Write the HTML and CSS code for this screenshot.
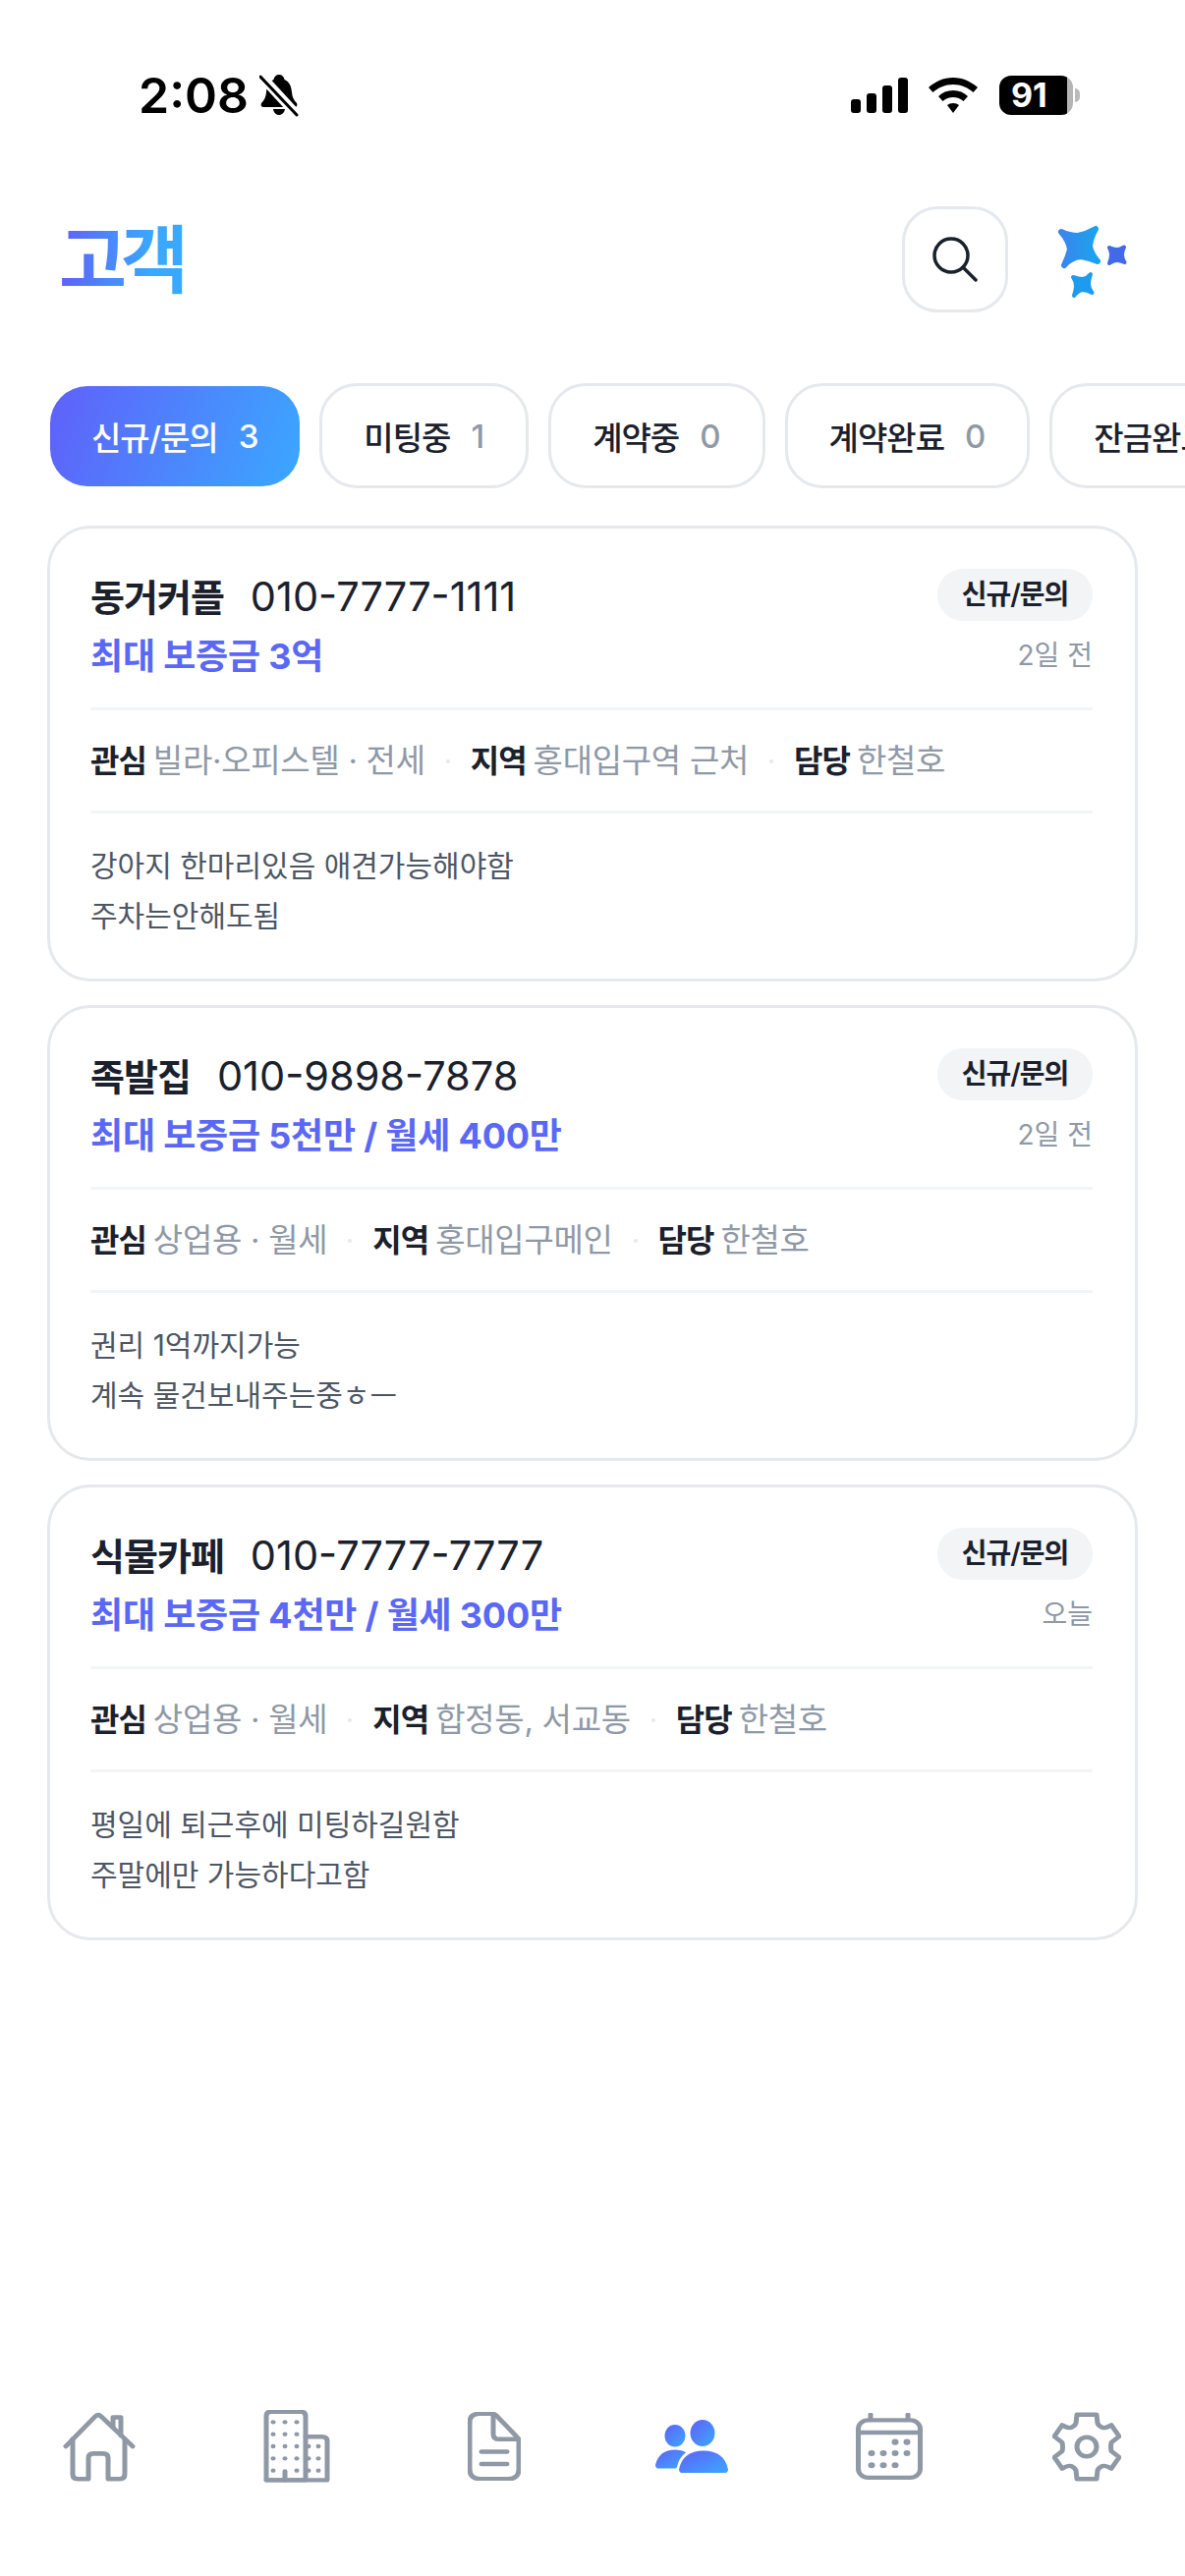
FILE: index.html
```html
<!DOCTYPE html>
<html>
<head>
  <title>고객</title>
  <meta name="viewport" content="width=device-width, initial-scale=1">
  <link rel="stylesheet" href="styles.css">
</head>
<body>
  <svg class="defs" width="0" height="0">
    <defs>
      <linearGradient id="grad_people" x1="0" y1="0" x2="1" y2="1">
        <stop offset="0" stop-color="#6060fa"/>
        <stop offset="1" stop-color="#3aa8ff"/>
      </linearGradient>
      <linearGradient id="grad_star" x1="0" y1="0" x2="1" y2="0">
        <stop offset="0" stop-color="#3a86ee"/>
        <stop offset="1" stop-color="#1ba3ec"/>
      </linearGradient>
    </defs>
  </svg>

  <div class="status-bar">
    <div class="status-left">
      <span class="clock">2:08</span>
      <svg class="bell" width="40" height="44" viewBox="0 0 40 44">
        <path d="M20 1c3 0 5 2 5.500 5 5 2 7 7 7.500 13 .5 5 2 8 5 11 1 2 0 4-2 4H4c-2 0-3-2-2-4 3-3 4.500-6 5-11 .5-6 2.500-11 7.500-13C15 3 17 1 20 1zM14 36h12c-.5 3.500-3 6-6 6s-5.500-2.500-6-6z" fill="#000"/>
        <path d="M2 4l35 38" stroke="#fff" stroke-width="8"/>
        <path d="M1 3l37 39" stroke="#000" stroke-width="3" stroke-linecap="round"/>
        <path d="M5 1l34 37" stroke="#fff" stroke-width="3"/>
      </svg>
    </div>
    <div class="status-right">
      <svg width="58" height="36" viewBox="0 0 58 36">
        <rect x="0" y="22" width="10" height="14" rx="3"/>
        <rect x="16" y="16" width="10" height="20" rx="3"/>
        <rect x="32" y="8" width="10" height="28" rx="3"/>
        <rect x="48" y="0" width="10" height="36" rx="3"/>
      </svg>
      <svg class="wifi" width="50" height="36" viewBox="0 0 50 36">
        <path d="M25 0c10 0 18 4 25 10l-4.500 5C40 10 33 7 25 7S10 10 4.500 15L0 10C7 4 15 0 25 0z"/>
        <path d="M25 13c6 0 11 2 15 6l-4.500 5C32.500 21.500 29 20 25 20s-7.500 1.500-10.500 4L10 19c4-4 9-6 15-6z"/>
        <path d="M25 26c2.500 0 4.500 .7 6 2l-6 8-6-8c1.500-1.300 3.500-2 6-2z"/>
      </svg>
      <div class="battery">
        <div class="battery-body">91</div>
        <span class="battery-nub"></span>
      </div>
    </div>
  </div>

  <header class="top-bar">
    <h1 class="page-title">고객</h1>
    <div class="top-actions">
      <button class="search-btn">
        <svg width="46" height="46" viewBox="0 0 46 46" fill="none" stroke="#1b212c" stroke-width="3.500" stroke-linecap="round">
          <circle cx="19" cy="19" r="17"/>
          <path d="M31 31l13 13"/>
        </svg>
      </button>
      <svg class="stars" width="88" height="84" viewBox="3 2 88 84">
        <path d="M18 16Q27 20 35 20Q44 18 53 13Q48 22 47 30Q48 38 55 46Q46 42 38 41Q28 42 21 50Q25 42 27 34Q26 25 18 16z" fill="url(#grad_star)" stroke="url(#grad_star)" stroke-width="6" stroke-linejoin="round"/>
        <path d="M67 32Q71 34 74.500 34Q78 34 82 31.500Q80 36 80 39.500Q80 43 82.500 47Q78 45 74.500 45Q71 45 67 48Q69 43 69 39.500Q69 36 67 32z" fill="#4169e8" stroke="#4169e8" stroke-width="4" stroke-linejoin="round"/>
        <path d="M30 62Q36 64 40 64Q45 63 48 59Q46 65 46 69Q46 73 49.500 78Q44 75 39 75Q35 76 31 81Q33 75 33 71Q33 66 30 62z" fill="#1f9bee" stroke="#1f9bee" stroke-width="4" stroke-linejoin="round"/>
      </svg>
    </div>
  </header>

  <nav class="tabs">
    <div class="tab active">신규/문의<span class="tab-count">3</span></div>
    <div class="tab">미팅중<span class="tab-count">1</span></div>
    <div class="tab">계약중<span class="tab-count">0</span></div>
    <div class="tab">계약완료<span class="tab-count">0</span></div>
    <div class="tab">잔금완료<span class="tab-count">0</span></div>
  </nav>

  <main class="card-list">
    <section class="card">
      <div class="card-head">
        <div>
          <div class="card-name"><strong>동거커플</strong><span>010-7777-1111</span></div>
          <div class="card-price">최대 보증금 3억</div>
        </div>
        <div class="card-side">
          <span class="badge">신규/문의</span>
          <span class="card-date">2일 전</span>
        </div>
      </div>
      <div class="card-meta">
        <span><b>관심</b> 빌라·오피스텔 · 전세</span><i></i>
        <span><b>지역</b> 홍대입구역 근처</span><i></i>
        <span><b>담당</b> 한철호</span>
      </div>
      <p class="card-note">강아지 한마리있음 애견가능해야함<br>주차는안해도됨</p>
    </section>

    <section class="card">
      <div class="card-head">
        <div>
          <div class="card-name"><strong>족발집</strong><span>010-9898-7878</span></div>
          <div class="card-price">최대 보증금 5천만 / 월세 400만</div>
        </div>
        <div class="card-side">
          <span class="badge">신규/문의</span>
          <span class="card-date">2일 전</span>
        </div>
      </div>
      <div class="card-meta">
        <span><b>관심</b> 상업용 · 월세</span><i></i>
        <span><b>지역</b> 홍대입구메인</span><i></i>
        <span><b>담당</b> 한철호</span>
      </div>
      <p class="card-note">권리 1억까지가능<br>계속 물건보내주는중ㅎㅡ</p>
    </section>

    <section class="card">
      <div class="card-head">
        <div>
          <div class="card-name"><strong>식물카페</strong><span>010-7777-7777</span></div>
          <div class="card-price">최대 보증금 4천만 / 월세 300만</div>
        </div>
        <div class="card-side">
          <span class="badge">신규/문의</span>
          <span class="card-date">오늘</span>
        </div>
      </div>
      <div class="card-meta">
        <span><b>관심</b> 상업용 · 월세</span><i></i>
        <span><b>지역</b> 합정동, 서교동</span><i></i>
        <span><b>담당</b> 한철호</span>
      </div>
      <p class="card-note">평일에 퇴근후에 미팅하길원함<br>주말에만 가능하다고함</p>
    </section>
  </main>

  <footer class="bottom-nav">
    <a class="nav-item">
      <svg class="line-icon" width="74" height="72" viewBox="0 0 74 78" preserveAspectRatio="none">
        <path d="M3 39L33 6q3-3 6 0L71 39"/>
        <path d="M10 31V70q0 5 5 5H26V52q0-5 5-5h10q5 0 5 5V75H58q5 0 5-5V31"/>
        <path d="M51 17V7H59V27"/>
      </svg>
    </a>
    <a class="nav-item">
      <svg class="line-icon" width="68" height="74" viewBox="0 0 68 84" preserveAspectRatio="none">
        <path d="M43 81V7q0-5-5-5H8Q3 2 3 7V81z"/>
        <path d="M43 31H60q5 0 5 5V81H3"/>
        <path d="M22 81V71"/>
        <g class="icon-dots">
          <circle cx="10" cy="14" r="2.500"/><circle cx="22" cy="14" r="2.500"/><circle cx="34" cy="14" r="2.500"/>
          <circle cx="10" cy="28" r="2.500"/><circle cx="22" cy="28" r="2.500"/><circle cx="34" cy="28" r="2.500"/>
          <circle cx="10" cy="42" r="2.500"/><circle cx="22" cy="42" r="2.500"/><circle cx="34" cy="42" r="2.500"/>
          <circle cx="10" cy="56" r="2.500"/><circle cx="22" cy="56" r="2.500"/><circle cx="34" cy="56" r="2.500"/>
          <circle cx="10" cy="70" r="2.500"/><circle cx="34" cy="70" r="2.500"/>
          <circle cx="46" cy="42" r="2.500"/><circle cx="56" cy="42" r="2.500"/>
          <circle cx="46" cy="56" r="2.500"/><circle cx="56" cy="56" r="2.500"/>
          <circle cx="46" cy="70" r="2.500"/><circle cx="56" cy="70" r="2.500"/>
        </g>
      </svg>
    </a>
    <a class="nav-item">
      <svg class="line-icon" width="54" height="70" viewBox="0 0 54 78" preserveAspectRatio="none">
        <path d="M12 2H24q3 0 5 2L49 27q3 3 3 6V65q0 11-11 11H13Q2 76 2 65V12Q2 2 12 2z"/>
        <path d="M26 3V25q0 6 6 6H52"/>
        <path d="M14 45H40"/>
        <path d="M14 59H40"/>
      </svg>
    </a>
    <a class="nav-item active">
      <svg width="74" height="54" viewBox="0 0 74 60" preserveAspectRatio="none">
        <g fill="url(#grad_people)">
          <ellipse cx="20" cy="18" rx="10.500" ry="12.500"/>
          <ellipse cx="48" cy="15" rx="12.500" ry="15"/>
          <path d="M4 55Q0 55 0 51Q4 34 20 34Q27 34 31 37Q24 43 22 53Q22 55 20 55z"/>
          <path d="M28 60Q24 60 24 56Q28 35 49 35Q70 35 74 56Q74 60 70 60z"/>
        </g>
      </svg>
    </a>
    <a class="nav-item">
      <svg class="line-icon" width="68" height="68" viewBox="0 0 68 78" preserveAspectRatio="none">
        <rect x="2.500" y="8.500" width="63" height="67" rx="10"/>
        <path d="M3 23H65"/>
        <path d="M15 2V8"/>
        <path d="M53 2V8"/>
        <g class="icon-dots">
          <circle cx="40" cy="34" r="3.500"/><circle cx="52" cy="34" r="3.500"/>
          <circle cx="16" cy="47" r="3.500"/><circle cx="28" cy="47" r="3.500"/><circle cx="40" cy="47" r="3.500"/><circle cx="52" cy="47" r="3.500"/>
          <circle cx="16" cy="61" r="3.500"/><circle cx="28" cy="61" r="3.500"/><circle cx="40" cy="61" r="3.500"/>
        </g>
      </svg>
    </a>
    <a class="nav-item">
      <svg class="line-icon" width="70" height="71" viewBox="0 0 70 80" preserveAspectRatio="none">
        <path d="M25 3H45L46 13Q47 16 51 18Q54 19 60 15L68 28L60 35Q59 40 60 45L68 52L60 65Q54 61 51 62Q47 64 46 67L45 77H25L24 67Q23 64 19 62Q16 61 10 65L2 52L10 45Q11 40 10 35L2 28L10 15Q16 19 19 18Q23 16 24 13z"/>
        <ellipse cx="35" cy="40" rx="10" ry="11"/>
      </svg>
    </a>
  </footer>
</body>
</html>
```

FILE: styles.css
```css
* {
  box-sizing: border-box;
}
html, body {
  margin: 0;
  height: 100%;
}
body {
  width: 1206px;
  height: 2622px;
  display: flex;
  flex-direction: column;
  overflow: hidden;
  background: #fff;
  color: #1b212c;
  font-family: Inter, "Noto Sans CJK KR", sans-serif;
}
.defs {
  position: absolute;
}

/* status bar */
.status-bar {
  height: 124px;
  padding: 75px 107px 0 141px;
  display: flex;
  justify-content: space-between;
  align-items: flex-start;
}
.status-left {
  display: flex;
  align-items: center;
  gap: 11px;
}
.clock {
  font-size: 50px;
  line-height: 44px;
  font-weight: 600;
  color: #000;
}
.status-right {
  display: flex;
  align-items: center;
  gap: 21px;
  height: 44px;
}
.wifi {
  margin-right: 1px;
}
.battery {
  display: flex;
  align-items: center;
  gap: 2px;
}
.battery-body {
  width: 75px;
  height: 40px;
  border-radius: 12px;
  background: linear-gradient(90deg, #000 92%, #b5b5b5 92%);
  color: #fff;
  font-size: 34px;
  font-weight: 700;
  line-height: 40px;
  padding-left: 12px;
}
.battery-nub {
  width: 5px;
  height: 14px;
  border-radius: 0 5px 5px 0;
  background: #bbb;
}

/* header */
.top-bar {
  height: 108px;
  margin-top: 86px;
  padding: 0 53px 0 60px;
  display: flex;
  justify-content: space-between;
  align-items: center;
}
.page-title {
  margin: 0;
  font-size: 75px;
  font-weight: 700;
  letter-spacing: -6px;
  line-height: 1;
  background: linear-gradient(90deg, #6060fa, #3aa8ff 75%);
  -webkit-background-clip: text;
  background-clip: text;
  color: transparent;
}
.top-actions {
  display: flex;
  align-items: center;
  gap: 39px;
}
.search-btn {
  width: 108px;
  height: 108px;
  border: 3px solid #e5e8ec;
  border-radius: 36px;
  background: #fff;
  padding: 0;
  display: flex;
  align-items: center;
  justify-content: center;
}

/* filter tabs */
.tabs {
  margin-top: 72px;
  padding-left: 51px;
  display: flex;
  gap: 20px;
  align-items: center;
  white-space: nowrap;
}
.tab {
  flex: none;
  height: 107px;
  padding: 0 42px;
  border: 3px solid #e5e8ec;
  border-radius: 38px;
  display: flex;
  align-items: center;
  font-size: 33px;
  font-weight: 500;
  letter-spacing: -1px;
}
.tab.active {
  height: 102px;
  border: 0;
  padding: 0 42px;
  color: #fff;
  background: linear-gradient(110deg, #6060fa, #3aa8ff);
}
.tab-count {
  margin-left: 21px;
  color: #8f99a6;
  letter-spacing: 0;
}
.active .tab-count {
  color: #fff;
}

/* customer cards */
.card-list {
  flex: 1;
  margin-top: 38px;
  padding: 0 48px;
  display: flex;
  flex-direction: column;
  gap: 24px;
}
.card {
  height: 464px;
  padding: 41px 43px 0 41px;
  border: 3px solid #e5e8ec;
  border-radius: 44px;
}
.card-head {
  height: 144px;
  display: flex;
  justify-content: space-between;
  align-items: flex-start;
  border-bottom: 3px solid #f3f4f6;
}
.card-name {
  display: flex;
  align-items: baseline;
  gap: 27px;
  font-size: 38px;
  line-height: 56px;
}
.card-name strong {
  font-weight: 600;
  letter-spacing: -1px;
}
.card-name span {
  font-size: 41.500px;
  font-weight: 400;
}
.card-price {
  margin-top: 6px;
  font-size: 36px;
  line-height: 52px;
  font-weight: 700;
  letter-spacing: -.2px;
  color: #5a68f5;
}
.card-side {
  display: flex;
  flex-direction: column;
  align-items: flex-end;
  gap: 15px;
}
.badge {
  height: 53px;
  width: 158px;
  border-radius: 26px;
  background: #f2f4f6;
  font-size: 28px;
  font-weight: 600;
  line-height: 53px;
  text-align: center;
  letter-spacing: -1px;
}
.card-date {
  font-size: 28px;
  line-height: 40px;
  color: #8f99a6;
}
.card-meta {
  height: 105px;
  padding-bottom: 5px;
  display: flex;
  align-items: center;
  gap: 21px;
  border-bottom: 3px solid #f3f4f6;
  font-size: 33px;
  letter-spacing: -.3px;
  color: #8f99a6;
}
.card-meta b {
  margin-right: -2px;
  font-size: 32px;
  font-weight: 700;
  letter-spacing: -1px;
  color: #1b212c;
}
.card-meta i {
  width: 4px;
  height: 4px;
  border-radius: 50%;
  background: #e5e8ec;
  margin-top: 6px;
}
.card-note {
  margin: 28px 0 0;
  font-size: 30px;
  line-height: 51px;
  color: #4d5665;
}

/* bottom navigation */
.bottom-nav {
  height: 180px;
  padding-top: 6px;
  display: grid;
  grid-template-columns: repeat(6, 1fr);
  align-items: start;
  justify-items: center;
}
.nav-item {
  height: 84px;
  display: flex;
  align-items: center;
}
.line-icon {
  fill: none;
  stroke: #8f99a6;
  stroke-width: 5;
  stroke-linecap: round;
  stroke-linejoin: round;
}
.icon-dots {
  fill: #8f99a6;
  stroke: none;
}
```
